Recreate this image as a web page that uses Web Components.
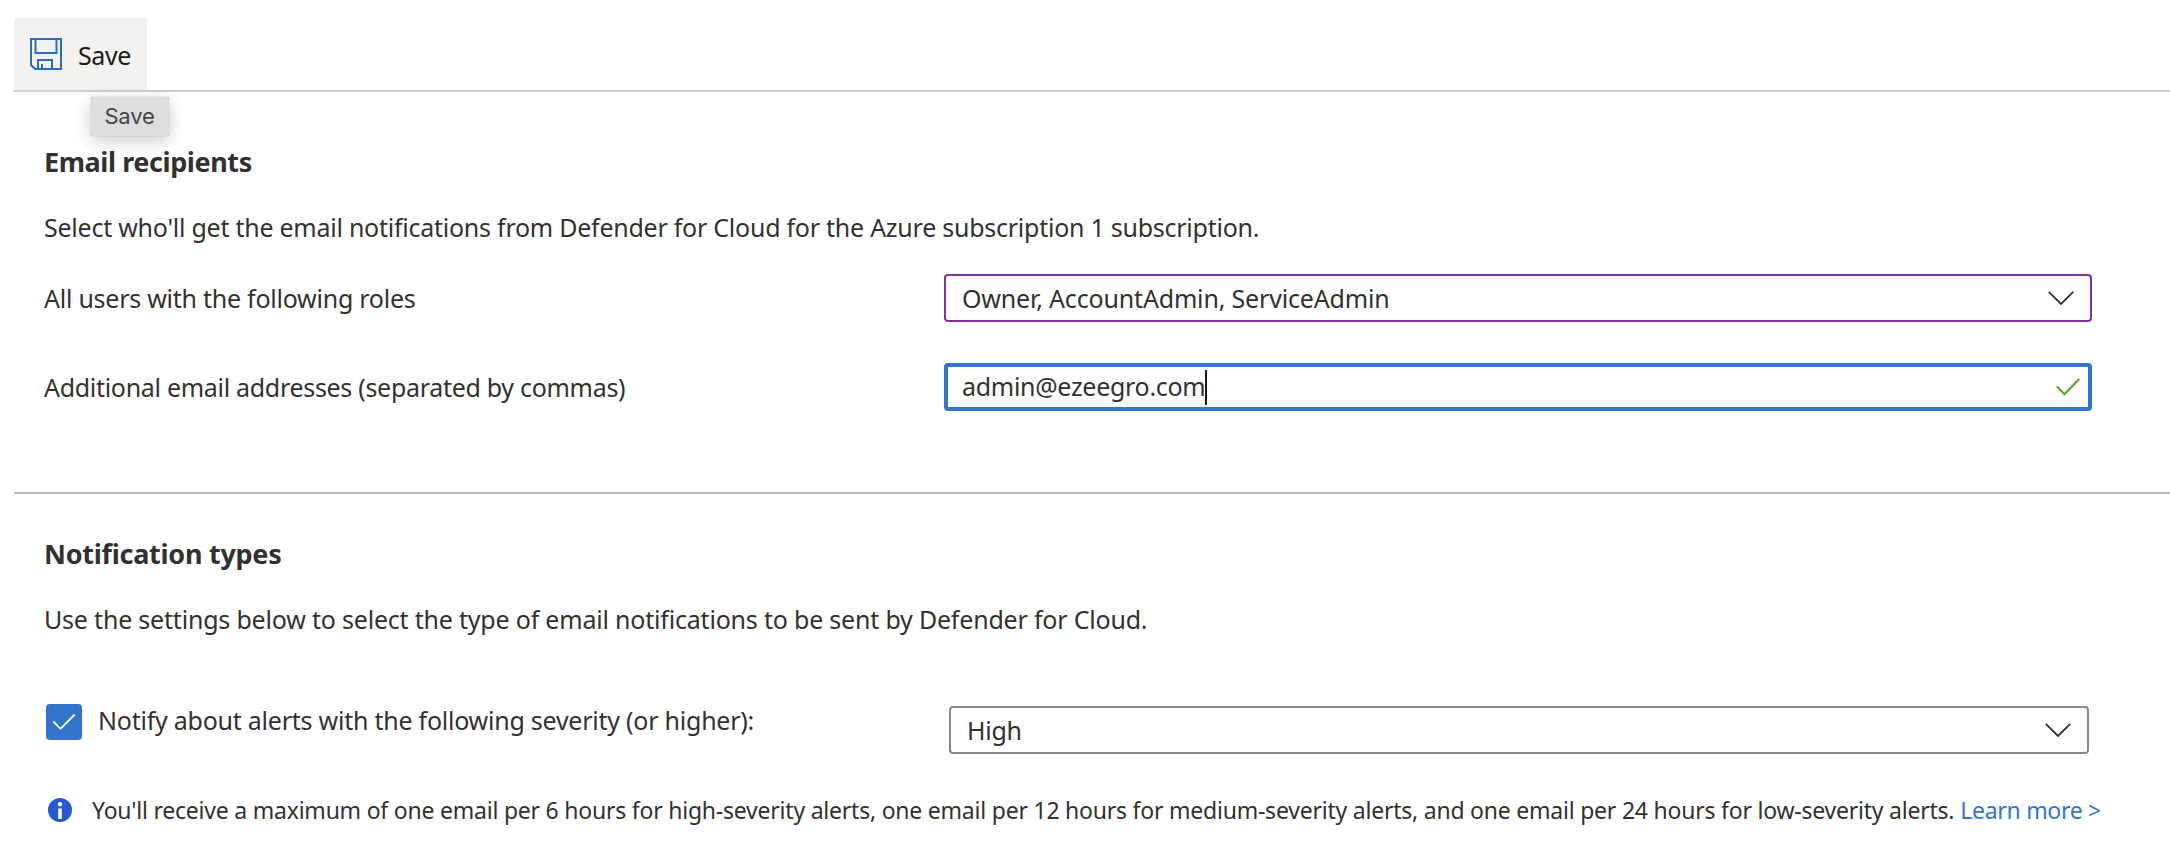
<!DOCTYPE html>
<html lang="en">
<head>
<meta charset="utf-8">
<title>Email notifications</title>
<style>
html,body{margin:0;background:#fff}
body{width:2170px;height:860px;overflow:hidden;font-family:"Noto Sans","Open Sans",sans-serif;font-size:25px;line-height:36px;letter-spacing:-.25px;color:#323130}
</style>
</head>
<body>
<notification-settings></notification-settings>
<script>
const define=(name,html)=>customElements.define(name,class extends HTMLElement{
  constructor(){super();this.attachShadow({mode:'open'}).innerHTML=html;}
});

define('ui-text',`<style>:host{display:inline-block;white-space:nowrap}</style><slot></slot>`);

define('ui-chevron',`<style>:host{display:block;width:26px;height:14px}svg{display:block}</style>
<svg width="26" height="14" viewBox="0 0 26 14" fill="none" stroke="#323130" stroke-width="1.8"><path d="M.8 .8 13 13 25.2 .8"/></svg>`);

define('ui-tooltip',`<style>:host{display:block;box-sizing:border-box;width:78px;height:39px;padding-right:1px;background:#dedede;border-radius:2px;box-shadow:0 0 1px rgba(0,0,0,.5),0 5px 18px rgba(0,0,0,.2);color:#464646;font:22px/39px Inter,sans-serif;letter-spacing:-.2px;text-align:center}</style><slot></slot>`);

define('command-bar',`<style>
:host{display:block;margin-left:14px;padding-top:18px;border-bottom:2px solid #d2d0ce}
.btn{position:relative;display:flex;align-items:center;width:133px;height:72px;background:#f3f2f1;box-sizing:border-box;padding-left:16px;color:#1b1a19}
.btn svg{display:block;margin-right:16px}
.label{letter-spacing:-.4px;padding-top:2px}
ui-tooltip{position:absolute;left:77px;top:79px;z-index:2}
</style>
<div class="btn"><svg width="32" height="32" viewBox="0 0 32 32" fill="none" stroke="#2b6cbf" stroke-width="2"><path d="M1 1H31V31H5L1 27ZM5.500 1V15H26.500V1M8 31V22H22V31M12 31V26"/></svg><ui-text class="label">Save</ui-text><ui-tooltip><ui-text>Save</ui-text></ui-tooltip></div>`);

define('section-title',`<style>:host{display:block;font-size:27px;line-height:37px;font-weight:700}</style><slot></slot>`);

define('select-box',`<style>:host{display:flex;align-items:center;justify-content:space-between;box-sizing:border-box;height:48px;border:2px solid var(--edge,#8a8886);border-radius:4px;padding:0 16px}</style><slot></slot><ui-chevron></ui-chevron>`);

define('email-box',`<style>:host{display:flex;align-items:center;box-sizing:border-box;height:48px;border:4px solid #3275cd;border-radius:4px;padding:0 8px 0 14px}
::slotted(*){margin-bottom:2px}
i{width:2px;height:35px;background:#1b1a19}svg{margin-left:auto}</style><slot></slot><i></i>
<svg width="24" height="18" viewBox="0 0 24 18" fill="none" stroke="#5fa02c" stroke-width="2"><path d="M.8 8.500 8.500 16.200 23.200 1"/></svg>`);

define('check-box',`<style>:host{display:block;width:36px;height:36px;background:#3275cd;border-radius:4px}svg{display:block}</style>
<svg width="36" height="36" viewBox="0 0 36 36" fill="none" stroke="#fff" stroke-width="1.800"><path d="M7.300 17.500 14.500 24.800 28.700 10.500"/></svg>`);

define('info-note',`<style>:host{display:flex;align-items:center;font-size:23px;line-height:32px}svg{display:block;margin-right:20px}a{color:#3275cd;margin-left:6px}</style>
<svg width="24" height="24" viewBox="0 0 24 24"><circle cx="12" cy="12" r="12" fill="#2659d2"/><g fill="#fff"><circle cx="12" cy="6.200" r="2.200"/><rect x="10.200" y="10.500" width="3.600" height="10.500"/></g></svg><slot></slot><a><slot name="link"></slot></a>`);

define('notification-settings',`<style>
:host{display:block}
section{padding-left:44px}
.row{display:grid;grid-template-columns:900px 1148px;align-items:center}
.severity{display:grid;grid-template-columns:36px 835px 1140px;column-gap:16px;margin-top:67px;padding-left:2px}
.severity select-box{margin-top:2px}
hr{border:0;height:2px;background:#b9b9b9;margin:0 0 0 14px}
</style>
<command-bar></command-bar>
<section style="height:400px;box-sizing:border-box;padding-top:51px">
<section-title><ui-text style="letter-spacing:-.42px">Email recipients</ui-text></section-title>
<div style="margin-top:29px"><ui-text>Select who'll get the email notifications from Defender for Cloud for the Azure subscription 1 subscription.</ui-text></div>
<div class="row" style="margin-top:29px"><ui-text>All users with the following roles</ui-text><select-box style="--edge:#8431a0"><ui-text style="letter-spacing:-.17px">Owner, AccountAdmin, ServiceAdmin</ui-text></select-box></div>
<div class="row" style="margin-top:41px"><ui-text style="letter-spacing:-.3px">Additional email addresses (separated by commas)</ui-text><email-box><ui-text style="letter-spacing:-.3px">admin@ezeegro.com</ui-text></email-box></div>
</section>
<hr>
<section style="padding-top:41px">
<section-title><ui-text style="letter-spacing:-.27px">Notification types</ui-text></section-title>
<div style="margin-top:29px"><ui-text style="letter-spacing:-.2px">Use the settings below to select the type of email notifications to be sent by Defender for Cloud.</ui-text></div>
<div class="severity"><check-box></check-box><ui-text style="margin-top:-2px;letter-spacing:-.24px">Notify about alerts with the following severity (or higher):</ui-text><select-box><ui-text>High</ui-text></select-box></div>
<info-note style="margin:40px 0 0 4px"><ui-text style="letter-spacing:-.222px">You'll receive a maximum of one email per 6 hours for high-severity alerts, one email per 12 hours for medium-severity alerts, and one email per 24 hours for low-severity alerts.</ui-text><ui-text slot="link" style="letter-spacing:-.3px">Learn more &gt;</ui-text></info-note>
</section>`);
</script>
</body>
</html>
